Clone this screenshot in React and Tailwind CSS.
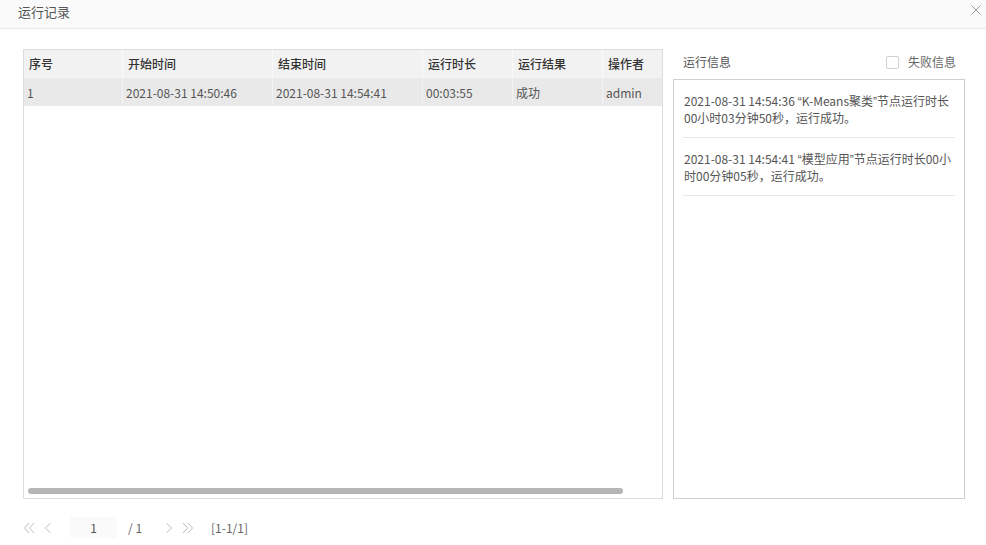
import React from "react";

const cols = [
  { w: "w-[99px]", h: "序号", v: "1" },
  { w: "w-[150px]", h: "开始时间", v: "2021-08-31 14:50:46" },
  { w: "w-[150px]", h: "结束时间", v: "2021-08-31 14:54:41" },
  { w: "w-[90px]", h: "运行时长", v: "00:03:55" },
  { w: "w-[90px]", h: "运行结果", v: "成功" },
  { w: "w-[59px]", h: "操作者", v: "admin" },
];

const Q = ({ children }) => (
  <span className="leading-[0] [font-family:'Liberation_Sans',sans-serif]">{children}</span>
);

const Chev = ({ dir = "l", double = false }) => (
  <svg width={double ? 12 : 8} height="12" viewBox={double ? "0 0 12 12" : "0 0 8 12"}>
    {double ? (
      dir === "l" ? (
        <path d="M6 1 L1.5 6 L6 11 M11 1 L6.5 6 L11 11" stroke="#bbb" strokeWidth="1" fill="none" />
      ) : (
        <path d="M1 1 L5.5 6 L1 11 M6 1 L10.5 6 L6 11" stroke="#bbb" strokeWidth="1" fill="none" />
      )
    ) : dir === "l" ? (
      <path d="M6.5 1 L1.5 6 L6.5 11" stroke="#bbb" strokeWidth="1" fill="none" />
    ) : (
      <path d="M1.5 1 L6.5 6 L1.5 11" stroke="#bbb" strokeWidth="1" fill="none" />
    )}
  </svg>
);

export default function App() {
  return (
    <div className="w-[986px] h-[545px] bg-white overflow-hidden flex flex-col [font-family:'Noto_Sans_CJK_SC',sans-serif]">
      <div className="h-[29px] shrink-0 bg-[#fafafa] border-b border-[#eaeaea] flex items-center justify-between pl-[18px] pr-[5px]">
        <span className="text-[13px] leading-[16px] text-[#555] -mt-[5px]">运行记录</span>
        <svg width="10" height="10" viewBox="0 0 10 10" className="-mt-[8px]">
          <path d="M0.5 0.5 L9.5 9.5 M9.5 0.5 L0.5 9.5" stroke="#a0a0a0" strokeWidth="1" fill="none" />
        </svg>
      </div>
      <div className="flex pt-[20px] pl-[23px] gap-[10px]">
        <div className="w-[640px] h-[450px] border border-[#dcdcdc] flex flex-col">
          <div className="flex h-[27px] bg-[#f2f2f2] items-center">
            {cols.map((c, i) => (
              <div
                key={i}
                className={`${c.w} h-full flex items-center px-[5px] text-[12px] font-medium text-[#333] ${i < cols.length - 1 ? "border-r border-[#fafafa]" : ""}`}
              >
                {c.h}
              </div>
            ))}
          </div>
          <div className="flex h-[29px] bg-[#e9e9e9] items-center border-t border-[#f4f4f4]">
            {cols.map((c, i) => (
              <div
                key={i}
                className={`${c.w} h-full flex items-center px-[3px] pt-[2px] text-[12px] text-[#555] ${i < cols.length - 1 ? "border-r border-[#f3f3f3]" : ""}`}
              >
                {c.v}
              </div>
            ))}
          </div>
          <div className="flex-1" />
          <div className="ml-[4px] mb-[4px] w-[595px] h-[6px] rounded-full bg-[#b5b5b5]" />
        </div>
        <div className="w-[292px] flex flex-col">
          <div className="h-[30px] flex items-center justify-between pl-[10px] pr-[9px]">
            <span className="text-[12px] text-[#555] -mt-[4px]">运行信息</span>
            <div className="flex items-center gap-[9px] -mt-[4px]">
              <div className="w-[13px] h-[13px] border border-[#d0d0d0] rounded-[2px] bg-white" />
              <span className="text-[12px] text-[#666]">失败信息</span>
            </div>
          </div>
          <div className="h-[420px] border border-[#cfcfcf] px-[9px]">
            <div className="pt-[12px] pb-[11px] pl-[1px] text-[12px] leading-[17px] text-[#555] border-b border-[#e8e8e8]">
              2021-08-31 14:54:36 <Q>“</Q>K-Means聚类<Q>”</Q>节点运行时长00小时03分钟50秒，运行成功。
            </div>
            <div className="pt-[12px] pb-[11px] pl-[1px] text-[12px] leading-[17px] text-[#555] border-b border-[#e8e8e8]">
              2021-08-31 14:54:41 <Q>“</Q>模型应用<Q>”</Q>节点运行时长00小时00分钟05秒，运行成功。
            </div>
          </div>
        </div>
      </div>
      <div className="flex items-center pl-[23px] mt-[18px] h-[21px] text-[12px]">
        <span className="w-[21px] flex"><Chev dir="l" double /></span>
        <span className="w-[26px] flex"><Chev dir="l" /></span>
        <div className="w-[47px] h-[21px] bg-[#fafafa] flex items-center justify-center text-[#555]">1</div>
        <span className="ml-[11px] w-[37px] text-[#666]">/ 1</span>
        <span className="w-[17px] flex"><Chev dir="r" /></span>
        <span className="w-[29px] flex"><Chev dir="r" double /></span>
        <span className="text-[#666]">[1-1/1]</span>
      </div>
    </div>
  );
}
